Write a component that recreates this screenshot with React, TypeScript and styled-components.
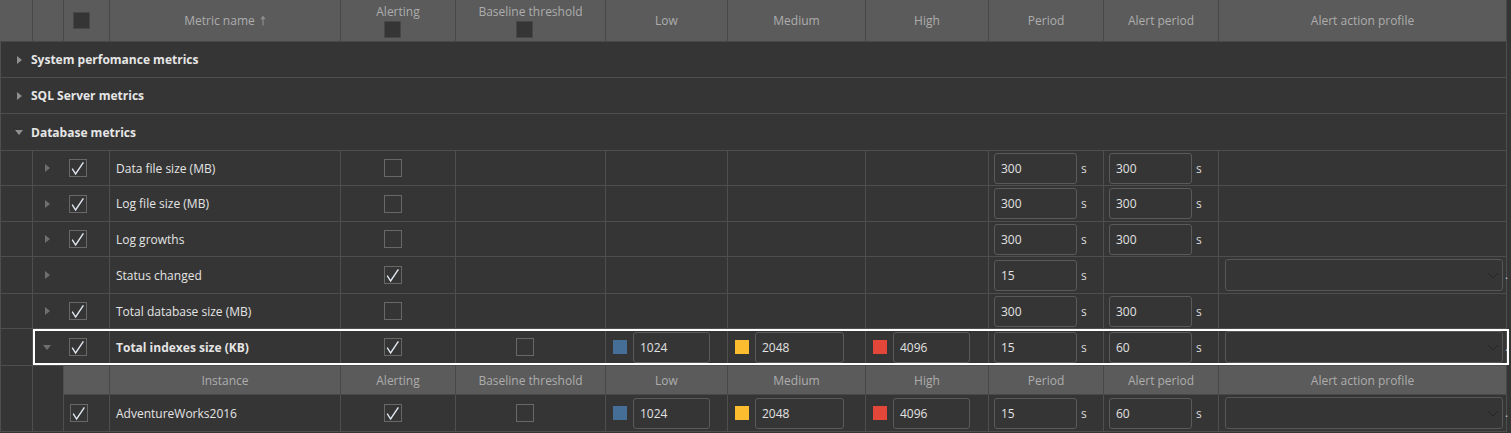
import React from "react";
import styled, { createGlobalStyle, css } from "styled-components";

const COLUMNS =
  "33px 31px 46px 231px 115px 150px 122px 138px 123px 115px 115px 288px";
const NESTED_COLUMNS =
  "46px 231px 115px 150px 122px 138px 123px 115px 115px 288px";

const LINE = "#4e4e4e";
const HEAD_LINE = "#484848";

const GlobalStyle = createGlobalStyle`
  *, *::before, *::after { box-sizing: border-box; }
  html, body { margin: 0; padding: 0; background: #353535; }
  body {
    font-family: "Open Sans", "Segoe UI", sans-serif;
    font-size: 12px;
    color: #e4e4e4;
    overflow: hidden;
  }
`;

const Table = styled.div`
  width: 1507px;
  box-shadow: inset 1px 0 ${LINE};
`;

const HeaderRow = styled.div`
  display: grid;
  grid-template-columns: ${COLUMNS};
  height: 42px;
  background: #5b5b5b;
  border-bottom: 1px solid ${HEAD_LINE};
`;

const HeadCell = styled.div<{ $stacked?: boolean; $nudge?: number }>`
  display: flex;
  flex-direction: column;
  align-items: center;
  justify-content: ${(p) => (p.$stacked ? "flex-start" : "center")};
  padding-top: ${(p) => (p.$stacked ? "4px" : "0")};
  padding-right: ${(p) => p.$nudge ?? 0}px;
  gap: 1px;
  border-right: 1px solid ${HEAD_LINE};
  color: #adadad;
  line-height: 16px;

  & > span:last-child {
    margin-right: ${(p) => (p.$stacked ? 12 : 0)}px;
  }
`;

const HeadLabel = styled.span`
  display: inline-flex;
  align-items: center;
  gap: 5px;
`;

const GroupRow = styled.div<{ $h: number }>`
  display: flex;
  align-items: center;
  gap: 9px;
  height: ${(p) => p.$h}px;
  padding-left: 16px;
  border-bottom: 1px solid ${LINE};
  border-right: 1px solid ${LINE};
  font-weight: 700;
  color: #e6e6e6;
`;

const CaretSlot = styled.span<{ $w: number }>`
  flex: none;
  width: ${(p) => p.$w}px;
  display: flex;
  justify-content: center;
`;

const Caret = styled.span<{ $open?: boolean; $tone: string }>`
  width: 0;
  height: 0;
  ${(p) =>
    p.$open
      ? css`
          border-left: 4px solid transparent;
          border-right: 4px solid transparent;
          border-top: 5px solid ${p.$tone};
        `
      : css`
          border-top: 4px solid transparent;
          border-bottom: 4px solid transparent;
          border-left: 5px solid ${p.$tone};
        `}
`;

const DataRow = styled.div<{ $h: number; $highlight?: boolean }>`
  position: relative;
  display: grid;
  grid-template-columns: ${COLUMNS};
  height: ${(p) => p.$h}px;
  border-bottom: 1px solid ${LINE};
  ${(p) =>
    p.$highlight &&
    css`
      &::after {
        content: "";
        position: absolute;
        left: 33px;
        right: -2px;
        top: 0;
        bottom: 0;
        border: 2px solid #ffffff;
        pointer-events: none;
      }
    `}
`;

const Cell = styled.div`
  display: flex;
  align-items: center;
  min-width: 0;
  border-right: 1px solid ${LINE};
`;

const ToggleCell = styled(Cell)`
  grid-column: span 2;
  padding-left: 10px;
  gap: 18px;
`;

const CheckCell = styled(Cell)`
  padding-left: 6px;
`;

const NameCell = styled(Cell)<{ $bold?: boolean }>`
  padding-left: 6px;
  font-weight: ${(p) => (p.$bold ? 700 : 400)};
  white-space: nowrap;
`;

const CenterCell = styled(Cell)`
  justify-content: center;
  padding-right: 11px;
`;

const ThresholdCell = styled(Cell)`
  padding-left: 7px;
  gap: 6px;
`;

const PeriodCell = styled(Cell)`
  padding-left: 5px;
  gap: 4px;
`;

const ProfileCell = styled(Cell)`
  padding-left: 6px;
  gap: 2px;
`;

const Box = styled.span<{ $head?: boolean }>`
  flex: none;
  display: inline-flex;
  align-items: center;
  justify-content: center;
  width: ${(p) => (p.$head ? 17 : 18)}px;
  height: ${(p) => (p.$head ? 17 : 18)}px;
  border: 1px solid ${(p) => (p.$head ? "#474747" : "#686868")};
  background: ${(p) => (p.$head ? "#353535" : "transparent")};
`;

const Swatch = styled.span<{ $color: string }>`
  flex: none;
  width: 14px;
  height: 14px;
  background: ${(p) => p.$color};
`;

const Field = styled.div<{ $w: number }>`
  flex: none;
  width: ${(p) => p.$w}px;
  height: 31px;
  display: flex;
  align-items: center;
  padding-left: 6px;
  border: 1px solid #5a5a5a;
  border-radius: 3px;
  color: #e2e2e2;
`;

const Unit = styled.span`
  color: #dcdcdc;
`;

const Select = styled.div`
  flex: none;
  width: 278px;
  align-self: stretch;
  margin: 2px 0;
  display: flex;
  align-items: center;
  justify-content: flex-end;
  padding-right: 3px;
  border: 1px solid #575757;
  border-radius: 3px;
`;

const Dot = styled.span`
  color: #bfc6d0;
  font-size: 12px;
  line-height: 1;
`;

const Detail = styled.div`
  display: grid;
  grid-template-columns: 33px 31px 1fr;
  border-bottom: 1px solid ${LINE};
`;

const SpacerCell = styled.div`
  border-right: 1px solid ${LINE};
`;

const Nested = styled.div`
  display: flex;
  flex-direction: column;
`;

const SubHeader = styled.div`
  display: grid;
  grid-template-columns: ${NESTED_COLUMNS};
  height: 29px;
  background: #5b5b5b;
  border-bottom: 1px solid ${HEAD_LINE};
`;

const SubHeadCell = styled.div`
  display: flex;
  align-items: center;
  justify-content: center;
  border-right: 1px solid ${HEAD_LINE};
  color: #adadad;
`;

const InstanceRow = styled.div`
  display: grid;
  grid-template-columns: ${NESTED_COLUMNS};
  height: 36px;
`;

const CheckMark = () => (
  <svg width="16" height="16" viewBox="0 0 16 16">
    <polyline
      points="2.2,8.6 5.6,14 13.4,2.4"
      fill="none"
      stroke="#e2e8f2"
      strokeWidth="1.4"
      strokeLinejoin="miter"
    />
  </svg>
);

const Check = ({ checked, head }: { checked?: boolean; head?: boolean }) => (
  <Box $head={head}>{checked && <CheckMark />}</Box>
);

const SortArrow = () => (
  <svg width="6" height="11" viewBox="0 0 6 11">
    <path d="M3 10.5V2" stroke="#8d8d8d" strokeWidth="1.2" />
    <path d="M0.4 4.2L3 0.6L5.6 4.2Z" fill="#8d8d8d" />
  </svg>
);

const Chevron = () => (
  <svg width="12" height="7" viewBox="0 0 12 7">
    <polyline points="1,1 6,6 11,1" fill="none" stroke="#242424" strokeWidth="1" />
  </svg>
);

const Toggle = ({ open, tone, w }: { open?: boolean; tone: string; w: number }) => (
  <CaretSlot $w={w}>
    <Caret $open={open} $tone={tone} />
  </CaretSlot>
);

const ProfileSelect = () => (
  <>
    <Select>
      <Chevron />
    </Select>
    <Dot>.</Dot>
  </>
);

const Thresholds = () => (
  <>
    <ThresholdCell>
      <Swatch $color="#456f96" />
      <Field $w={77}>1024</Field>
    </ThresholdCell>
    <ThresholdCell>
      <Swatch $color="#fbbd2f" />
      <Field $w={89}>2048</Field>
    </ThresholdCell>
    <ThresholdCell>
      <Swatch $color="#e2473a" />
      <Field $w={77}>4096</Field>
    </ThresholdCell>
  </>
);

const Period = ({ value }: { value?: string }) => (
  <PeriodCell>
    {value && (
      <>
        <Field $w={83}>{value}</Field>
        <Unit>s</Unit>
      </>
    )}
  </PeriodCell>
);

type Metric = {
  name: string;
  h: number;
  selectable: boolean;
  alerting: boolean;
  period: string;
  alertPeriod?: string;
  profile?: boolean;
};

const metrics: Metric[] = [
  { name: "Data file size (MB)", h: 35, selectable: true, alerting: false, period: "300", alertPeriod: "300" },
  { name: "Log file size (MB)", h: 36, selectable: true, alerting: false, period: "300", alertPeriod: "300" },
  { name: "Log growths", h: 35, selectable: true, alerting: false, period: "300", alertPeriod: "300" },
  { name: "Status changed", h: 37, selectable: false, alerting: true, period: "15", profile: true },
  { name: "Total database size (MB)", h: 35, selectable: true, alerting: false, period: "300", alertPeriod: "300" },
];

const headers = ["Low", "Medium", "High", "Period", "Alert period", "Alert action profile"];

export default function App() {
  return (
    <>
      <GlobalStyle />
      <Table>
        <HeaderRow>
          <HeadCell />
          <HeadCell />
          <HeadCell $nudge={11}>
            <Check head />
          </HeadCell>
          <HeadCell>
            <HeadLabel>
              Metric name <SortArrow />
            </HeadLabel>
          </HeadCell>
          <HeadCell $stacked>
            Alerting
            <Check head />
          </HeadCell>
          <HeadCell $stacked>
            Baseline threshold
            <Check head />
          </HeadCell>
          {headers.map((h) => (
            <HeadCell key={h}>{h}</HeadCell>
          ))}
        </HeaderRow>

        <GroupRow $h={36}>
          <Toggle tone="#8f8f8f" w={6} />
          System perfomance metrics
        </GroupRow>
        <GroupRow $h={36}>
          <Toggle tone="#8f8f8f" w={6} />
          SQL Server metrics
        </GroupRow>
        <GroupRow $h={37}>
          <Toggle open tone="#8f8f8f" w={6} />
          Database metrics
        </GroupRow>

        {metrics.map((m) => (
          <DataRow key={m.name} $h={m.h}>
            <Cell />
            <ToggleCell>
              <Toggle tone="#6f6f6f" w={8} />
              {m.selectable && <Check checked />}
            </ToggleCell>
            <NameCell>{m.name}</NameCell>
            <CenterCell>
              <Check checked={m.alerting} />
            </CenterCell>
            <Cell />
            <Cell />
            <Cell />
            <Cell />
            <Period value={m.period} />
            <Period value={m.alertPeriod} />
            <ProfileCell>{m.profile && <ProfileSelect />}</ProfileCell>
          </DataRow>
        ))}

        <DataRow $h={37} $highlight>
          <Cell />
          <ToggleCell>
            <Toggle open tone="#6f6f6f" w={8} />
            <Check checked />
          </ToggleCell>
          <NameCell $bold>Total indexes size (KB)</NameCell>
          <CenterCell>
            <Check checked />
          </CenterCell>
          <CenterCell>
            <Check />
          </CenterCell>
          <Thresholds />
          <Period value="15" />
          <Period value="60" />
          <ProfileCell>
            <ProfileSelect />
          </ProfileCell>
        </DataRow>

        <Detail>
          <SpacerCell />
          <SpacerCell />
          <Nested>
            <SubHeader>
              <SubHeadCell />
              <SubHeadCell>Instance</SubHeadCell>
              <SubHeadCell>Alerting</SubHeadCell>
              <SubHeadCell>Baseline threshold</SubHeadCell>
              {headers.map((h) => (
                <SubHeadCell key={h}>{h}</SubHeadCell>
              ))}
            </SubHeader>
            <InstanceRow>
              <CheckCell>
                <Check checked />
              </CheckCell>
              <NameCell>AdventureWorks2016</NameCell>
              <CenterCell>
                <Check checked />
              </CenterCell>
              <CenterCell>
                <Check />
              </CenterCell>
              <Thresholds />
              <Period value="15" />
              <Period value="60" />
              <ProfileCell>
                <ProfileSelect />
              </ProfileCell>
            </InstanceRow>
          </Nested>
        </Detail>
      </Table>
    </>
  );
}
